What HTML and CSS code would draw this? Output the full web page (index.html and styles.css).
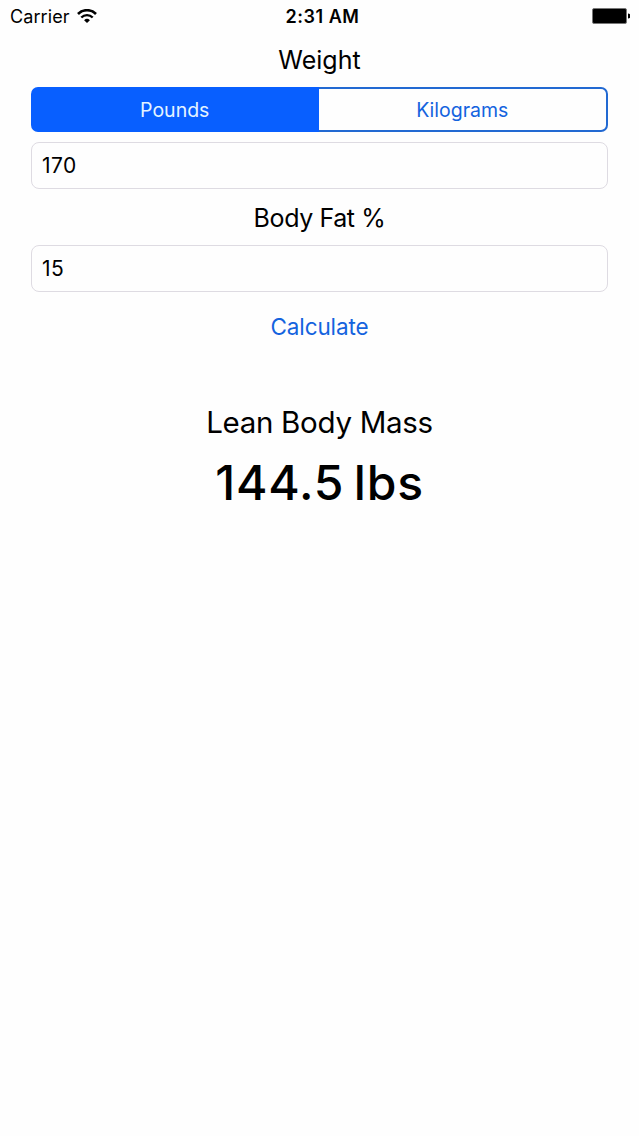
FILE: index.html
```html
<!DOCTYPE html>
<html lang="en">
<head>
  <meta charset="UTF-8" />
  <meta name="viewport" content="width=device-width, initial-scale=1.0"/>
  <title>Lean Body Mass</title>
  <link rel="stylesheet" href="styles.css">
</head>
<body>

    <div class="status-bar">
        <div class="carrier">
            <span>Carrier</span>
            <svg class="wifi" width="20" height="14" viewBox="0 0 20 14">
                <path d="M1 5 A12.5 12.5 0 0 1 19 5" fill="none" stroke="#000" stroke-width="2.6"/>
                <path d="M4.3 8.5 A8 8 0 0 1 15.7 8.5" fill="none" stroke="#000" stroke-width="2.4"/>
                <path d="M10 14 L7.1 11.2 A4.2 4.2 0 0 1 12.9 11.2 Z"/>
            </svg>
        </div>
        <span class="time">2:31 AM</span>
        <div class="battery">
            <svg width="38" height="16" viewBox="0 0 38 16">
                <rect x="0.5" y="0.5" width="34" height="15" rx="1.5" stroke="#777"/>
                <path d="M36 5.5 A2.5 2.5 0 0 1 36 10.5 Z"/>
            </svg>
        </div>
    </div>

    <main class="form">
        <label class="field-label" for="weight">Weight</label>
        <div class="units">
            <button class="unit selected">Pounds</button>
            <button class="unit">Kilograms</button>
        </div>
        <input type="text" id="weight" value="170" />

        <label class="field-label fat-label" for="fat">Body Fat %</label>
        <input type="text" id="fat" value="15" />

        <button class="calculate">Calculate</button>

        <h2>Lean Body Mass</h2>
        <div class="result" id="result">144.5 lbs</div>
    </main>

</body>
</html>
```

FILE: styles.css
```css
* {
  box-sizing: border-box;
}

body {
  margin: 0;
  min-height: 100vh;
  background: #fefefe;
  color: #000;
  font-family: Inter, "Liberation Sans", sans-serif;
}

.status-bar {
  display: grid;
  grid-template-columns: 1fr auto 1fr;
  align-items: center;
  height: 32px;
  padding: 0 9px 0 10px;
  font-size: 18px;
}

.carrier {
  display: flex;
  align-items: center;
  gap: 7px;
}

.carrier span {
  letter-spacing: 0.1px;
}

.time {
  padding-left: 5px;
  font-weight: 600;
  letter-spacing: 0.5px;
}

.battery {
  display: flex;
  justify-content: flex-end;
}

.form {
  display: flex;
  flex-direction: column;
  padding: 0 31px;
}

.field-label {
  margin-top: 12px;
  height: 43px;
  line-height: 32px;
  font-size: 25px;
  text-align: center;
}

.fat-label {
  margin-top: 13px;
  height: 43px;
  letter-spacing: -0.4px;
}

.units {
  display: flex;
  height: 45px;
  margin-bottom: 10px;
}

button {
  padding: 0;
  border: none;
  background: none;
  color: #1463de;
  font-family: inherit;
}

.unit {
  flex: 1;
  border: 2px solid #2269d2;
  border-left: none;
  border-radius: 0 7px 7px 0;
  font-size: 19.5px;
}

.unit.selected {
  border: none;
  border-radius: 7px 0 0 7px;
  background: #085fff;
  color: #e4f4ff;
}

input {
  width: 100%;
  height: 47px;
  padding: 0 10px;
  border: 1px solid #dedbe2;
  border-radius: 8px;
  background: #fefefe;
  color: #000;
  font-family: inherit;
  font-size: 21px;
  letter-spacing: 0.4px;
}

.calculate {
  align-self: center;
  height: 36px;
  margin-top: 16px;
  margin-bottom: 2px;
  font-size: 22.5px;
  letter-spacing: -0.1px;
}

h2 {
  margin: 56px 0 0;
  line-height: 40px;
  font-size: 29.5px;
  font-weight: 400;
  letter-spacing: -0.3px;
  text-align: center;
}

.result {
  margin-top: 11px;
  line-height: 60px;
  font-size: 48px;
  font-weight: 500;
  letter-spacing: 0.8px;
  word-spacing: -4px;
  text-align: center;
}
```
